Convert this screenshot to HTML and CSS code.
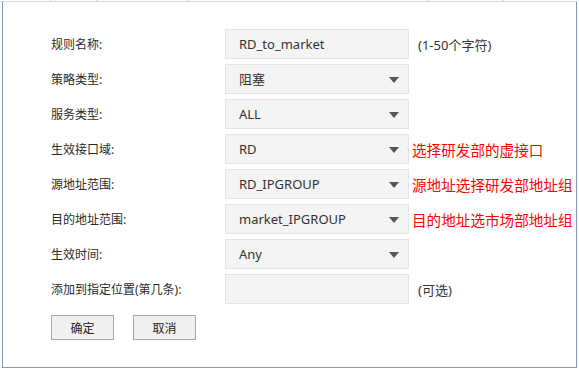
FILE: index.html
```html
<!DOCTYPE html>
<html lang="zh-CN">
<head>
  <meta charset="UTF-8">
  <meta name="viewport" content="width=device-width, initial-scale=1.0">
  <title>新增规则</title>
  <link rel="stylesheet" href="styles.css">
</head>
<body>
  <div class="top-strip">
    <span class="cell c1"></span>
    <span class="cell c2"></span>
    <span class="cell c3"></span>
    <span class="cell c4"></span>
    <span class="cell c5"></span>
    <span class="cell c6"></span>
  </div>
  <div class="panel">
    <form class="rule-form">
      <div class="row">
        <label class="label">规则名称:</label>
        <div class="field">RD_to_market</div>
        <span class="hint">(1-50个字符)</span>
      </div>
      <div class="row">
        <label class="label">策略类型:</label>
        <div class="field select">阻塞<i class="arrow"></i></div>
      </div>
      <div class="row">
        <label class="label">服务类型:</label>
        <div class="field select">ALL<i class="arrow"></i></div>
      </div>
      <div class="row">
        <label class="label">生效接口域:</label>
        <div class="field select">RD<i class="arrow"></i></div>
        <span class="note">选择研发部的虚接口</span>
      </div>
      <div class="row">
        <label class="label">源地址范围:</label>
        <div class="field select">RD_IPGROUP<i class="arrow"></i></div>
        <span class="note">源地址选择研发部地址组</span>
      </div>
      <div class="row">
        <label class="label">目的地址范围:</label>
        <div class="field select">market_IPGROUP<i class="arrow"></i></div>
        <span class="note">目的地址选市场部地址组</span>
      </div>
      <div class="row">
        <label class="label">生效时间:</label>
        <div class="field select">Any<i class="arrow"></i></div>
      </div>
      <div class="row">
        <label class="label">添加到指定位置(第几条):</label>
        <div class="field"></div>
        <span class="hint">(可选)</span>
      </div>
      <div class="actions">
        <button type="button" class="btn">确定</button>
        <button type="button" class="btn">取消</button>
      </div>
    </form>
  </div>
</body>
</html>
```

FILE: styles.css
```css
body { margin: 0; font-family: "Noto Sans", "Noto Sans CJK SC", sans-serif; color: #333; background: #fff; }

.top-strip { display: flex; height: 1px; border-bottom: 1px solid #d4d4d4; width: 577px; }
.top-strip .cell { border-right: 1px solid #d4d4d4; height: 1px; }
.c1 { width: 50px; }
.c2 { width: 45px; }
.c3 { width: 90px; }
.c4 { width: 239px; }
.c5 { width: 75px; }
.c6 { width: 71px; border-right: none !important; }

.panel { margin-left: 2px; width: 573px; height: 365px; border: 1px solid #7f9bb9; border-top: none; }

.rule-form { padding: 27px 0 0 48px; }
.row { display: flex; align-items: center; height: 30px; margin-bottom: 5px; }
.label { width: 174px; font-size: 12px; color: #2a2a2a; }
.field { position: relative; box-sizing: border-box; width: 184px; height: 30px; line-height: 28px; padding-left: 13px; border: 1px solid #e4e4e4; background: #f4f4f4; font-size: 13px; color: #333; }
.arrow { position: absolute; right: 9px; top: 12px; width: 0; height: 0; border-left: 5px solid transparent; border-right: 5px solid transparent; border-top: 6px solid #555; }
.hint { margin-left: 9px; font-size: 13px; }
.note { margin-left: 3px; font-size: 14.6px; color: #f00; }

.actions { display: flex; gap: 19px; margin-top: 11px; }
.btn { width: 63px; height: 25px; padding: 0; border: 1px solid #aaa; background: #f0f0f0; font-family: "Noto Sans CJK SC", sans-serif; font-size: 12px; color: #222; }
```
